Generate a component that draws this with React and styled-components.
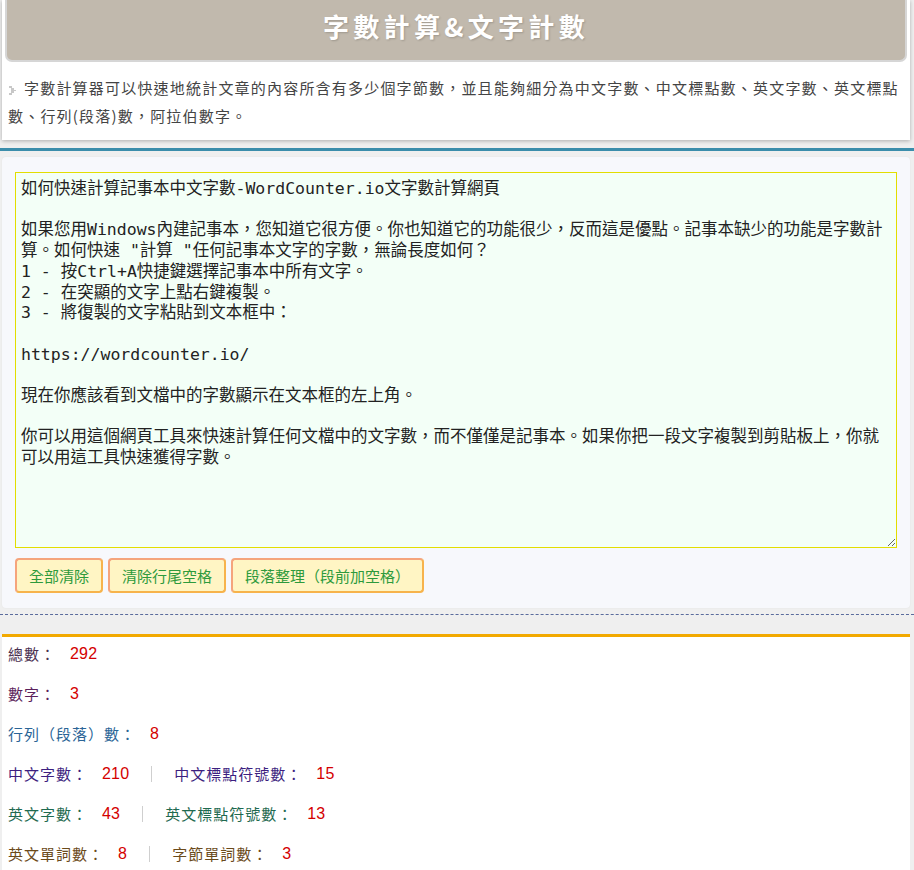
import React from "react";
import styled, { createGlobalStyle } from "styled-components";

const GlobalStyle = createGlobalStyle`
  html, body { margin: 0; padding: 0; }
  body {
    background: #efefef;
    font-family: "Liberation Sans", Arial, "Noto Sans CJK TC", sans-serif;
    color: #444;
    text-spacing-trim: space-all;
  }
  * { box-sizing: border-box; }
`;

const Page = styled.div`
  display: flex;
  flex-direction: column;
  width: 914px;
`;

const HeaderCard = styled.header`
  margin: 0 4px 0 2px;
  background: #fff;
  box-shadow: 0 1px 4px rgba(0, 0, 0, 0.28);
  padding-bottom: 10px;
`;

const TitleBar = styled.h1`
  margin: 0 3px;
  height: 62px;
  background: #c1b9ad;
  border: 2px solid #d6d6d6;
  border-top: none;
  border-radius: 0 0 7px 7px;
  display: flex;
  align-items: center;
  justify-content: center;
  padding-bottom: 9px;
  color: #fff;
  font-family: "Noto Sans CJK TC", "Liberation Sans", sans-serif;
  font-weight: 700;
  font-size: 26px;
  letter-spacing: 4.3px;
  text-shadow: 1px 1px 2px rgba(0, 0, 0, 0.18);
`;

const Intro = styled.p`
  margin: 12px 4px 0 6px;
  font-family: "Noto Sans CJK TC", "Liberation Sans", sans-serif;
  font-size: 15px;
  line-height: 28px;
  letter-spacing: 1.2px;
  color: #444;
`;

const Bullet = styled.svg`
  display: inline-block;
  width: 7px;
  height: 9px;
  margin: 0 8px 0 1px;
  vertical-align: -1px;
`;

const EditorSection = styled.section`
  margin-top: 8px;
  border-top: 3px solid #3b8dab;
  border-bottom: 1px dashed #5a6b9c;
  padding: 6px 4px 6px 2px;
`;

const EditorPanel = styled.div`
  background: #f7f8fc;
  border-radius: 4px;
  padding: 15px 13px 15px 13px;
  box-shadow: 0 0 2px rgba(0, 0, 0, 0.06);
`;

const TextArea = styled.textarea`
  display: block;
  width: 100%;
  height: 376px;
  margin: 0;
  padding: 6px 5px;
  border: 1px solid #e2de00;
  background: #f3fff7;
  color: #222;
  font-family: "DejaVu Sans Mono", "Noto Sans CJK TC", monospace;
  font-size: 16.5px;
  line-height: 20.7px;
  resize: vertical;
  outline: none;
`;

const ButtonRow = styled.div`
  display: flex;
  gap: 5px;
  margin-top: 10px;
`;

const ActionButton = styled.button`
  height: 35px;
  padding: 0 12px;
  background: #fff5c4;
  border: 2px solid;
  border-color: #f5a47c #f7b34c #f7b34c #f5a47c;
  border-radius: 4px;
  color: #2e9a3c;
  font-family: "Noto Sans CJK TC", "Liberation Sans", sans-serif;
  font-size: 15px;
  line-height: 31px;
  text-spacing-trim: space-all;
  cursor: pointer;
`;

const ResultsCard = styled.section`
  margin: 19px 4px 0 2px;
  background: #fff;
  border-top: 3px solid #f2a900;
  padding: 6px 6px 20px 6px;
  min-height: 260px;
`;

const StatRow = styled.p`
  display: flex;
  align-items: center;
  margin: 0 0 18px 0;
  line-height: 22px;
  font-size: 15px;
  color: ${(p) => p.$color};
`;

const Label = styled.span`
  font-family: "Noto Sans CJK TC", "Liberation Sans", sans-serif;
  letter-spacing: 1px;
`;

const Value = styled.span`
  margin-left: 14px;
  color: #d40000;
  font-family: "Liberation Sans", Arial, "Noto Sans", sans-serif;
  font-size: 16px;
  letter-spacing: 0.2px;
`;

const Divider = styled.span`
  width: 1px;
  height: 16px;
  margin: 0 22px;
  background: #cfcfcf;
`;

const initialText = `如何快速計算記事本中文字數-WordCounter.io文字數計算網頁

如果您用Windows內建記事本，您知道它很方便。你也知道它的功能很少，反而這是優點。記事本缺少的功能是字數計算。如何快速 "計算 "任何記事本文字的字數，無論長度如何？
1 - 按Ctrl+A快捷鍵選擇記事本中所有文字。
2 - 在突顯的文字上點右鍵複製。
3 - 將復製的文字粘貼到文本框中：

https://wordcounter.io/

現在你應該看到文檔中的字數顯示在文本框的左上角。

你可以用這個網頁工具來快速計算任何文檔中的文字數，而不僅僅是記事本。如果你把一段文字複製到剪貼板上，你就可以用這工具快速獲得字數。`;

const stats = [
  { color: "#4a3050", items: [["總數：", "292"]] },
  { color: "#5c1f5c", items: [["數字：", "3"]] },
  { color: "#2a6496", items: [["行列（段落）數：", "8"]] },
  { color: "#3d1f80", items: [["中文字數：", "210"], ["中文標點符號數：", "15"]] },
  { color: "#1f6a50", items: [["英文字數：", "43"], ["英文標點符號數：", "13"]] },
  { color: "#6b4a1a", items: [["英文單詞數：", "8"], ["字節單詞數：", "3"]] },
];

const buttons = ["全部清除", "清除行尾空格", "段落整理（段前加空格）"];

export default function App() {
  return (
    <>
      <GlobalStyle />
      <Page>
        <HeaderCard>
          <TitleBar>字數計算&amp;文字計數</TitleBar>
          <Intro>
            <Bullet viewBox="0 0 7 9">
              <path d="M0 0h3v2h2v2h2v1H5v2H3v2H0V7h2V2H0z" fill="#c8c8c8" />
            </Bullet>
            字數計算器可以快速地統計文章的內容所含有多少個字節數，並且能夠細分為中文字數、中文標點數、英文字數、英文標點數、行列(段落)數，阿拉伯數字。
          </Intro>
        </HeaderCard>

        <EditorSection>
          <EditorPanel>
            <TextArea defaultValue={initialText} spellCheck={false} />
            <ButtonRow>
              {buttons.map((b) => (
                <ActionButton key={b} type="button">
                  {b}
                </ActionButton>
              ))}
            </ButtonRow>
          </EditorPanel>
        </EditorSection>

        <ResultsCard>
          {stats.map((row, i) => (
            <StatRow key={i} $color={row.color}>
              {row.items.map(([label, value], j) => (
                <React.Fragment key={label}>
                  {j > 0 && <Divider />}
                  <Label>{label}</Label>
                  <Value>{value}</Value>
                </React.Fragment>
              ))}
            </StatRow>
          ))}
        </ResultsCard>
      </Page>
    </>
  );
}
